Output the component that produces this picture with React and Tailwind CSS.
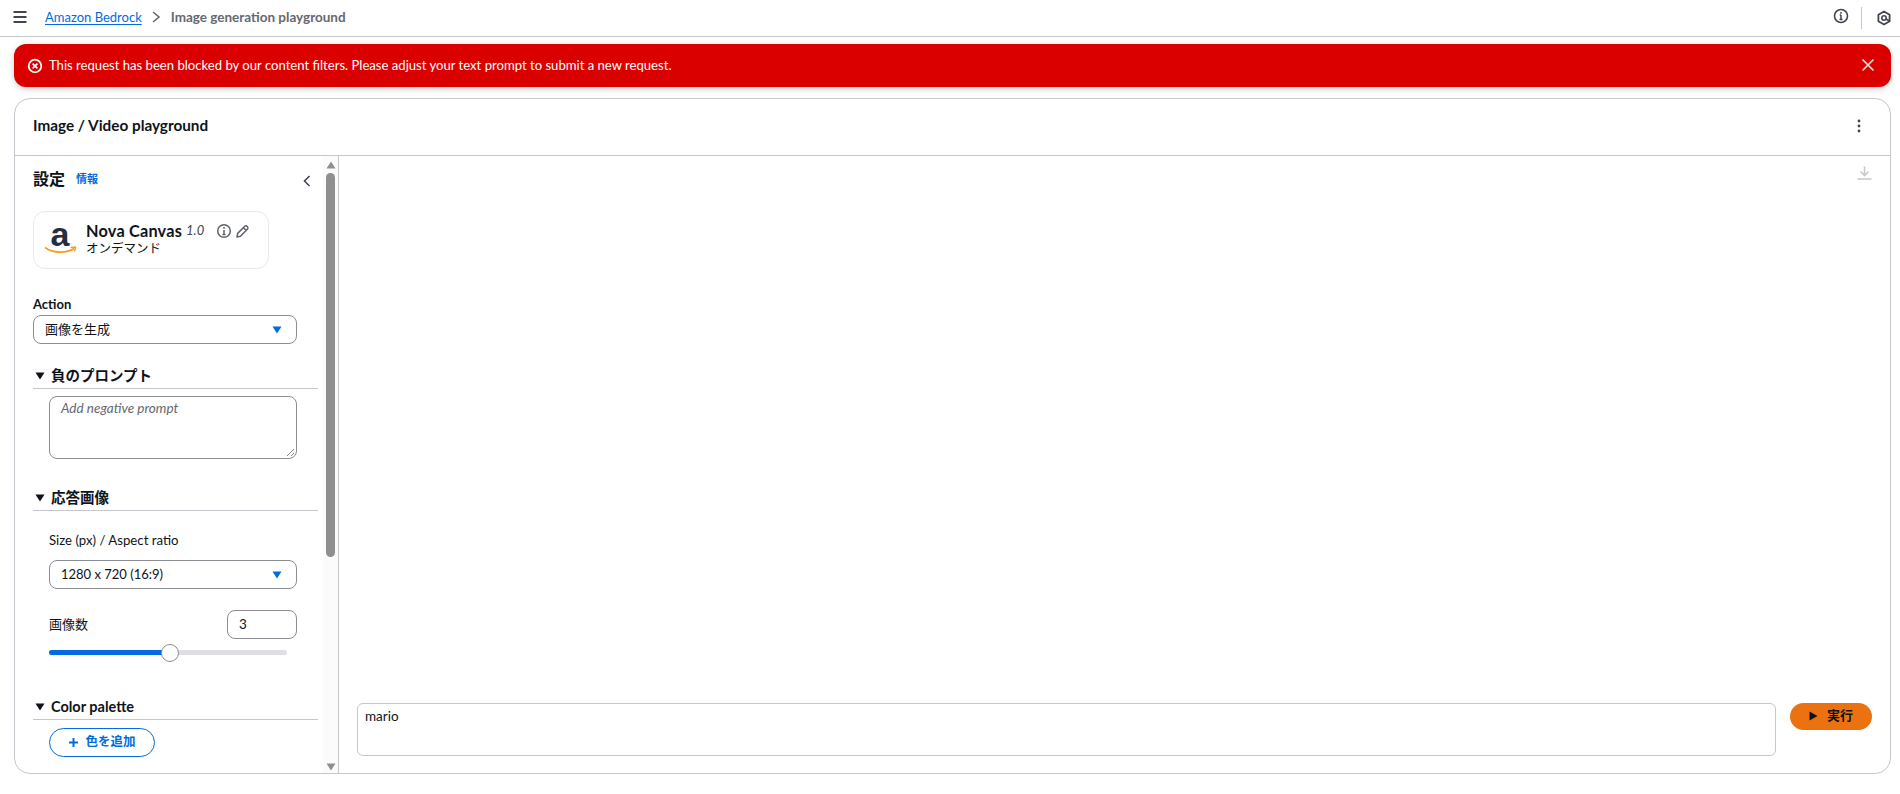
import React from "react";

const font = { fontFamily: 'Lato,"Noto Sans CJK JP",sans-serif' };

function Caret({ className = "" }) {
  return (
    <svg width="10" height="8" viewBox="0 0 10 8" className={className}>
      <path d="M0.5 0.5h9L5 7.5z" fill="currentColor" />
    </svg>
  );
}

function Section({ title }) {
  return (
    <div className="flex h-[23px] items-start gap-[6px] border-b border-[#c6c6cd] pl-[2px] text-[14.5px] leading-[20px] font-bold text-[#0f141a]">
      <Caret className="mt-[6px] shrink-0 text-[#0f141a]" />
      <span className="leading-[20px]">{title}</span>
    </div>
  );
}

function Select({ label }) {
  return (
    <div className="flex h-[29px] items-center justify-between rounded-[8px] border border-[#8c8c94] bg-white pl-[11px] pr-[14px] text-[13px] text-[#0f141a]">
      <span>{label}</span>
      <Caret className="text-[#006ce0]" />
    </div>
  );
}

export default function App() {
  return (
    <div className="flex h-[794px] w-[1900px] flex-col overflow-hidden bg-white text-[#0f141a]" style={font}>
      {/* top bar */}
      <header className="flex h-[37px] shrink-0 items-center border-b border-[#c6c6cd] pb-[3px] pl-[12px] pr-[8px]">
        <svg width="16" height="14" viewBox="0 0 16 14" className="text-[#424650]">
          <path d="M1.5 2h13M1.5 7h13M1.5 12h13" stroke="currentColor" strokeWidth="1.8" fill="none" />
        </svg>
        <a className="ml-[17px] text-[13px] leading-[18px] text-[#006ce0] underline underline-offset-2">Amazon Bedrock</a>
        <svg width="10" height="14" viewBox="0 0 10 14" className="ml-[9px] text-[#656871]">
          <path d="M2 2l6 5-6 5" stroke="currentColor" strokeWidth="1.6" fill="none" />
        </svg>
        <span className="ml-[10px] text-[13.5px] leading-[18px] font-bold text-[#656871]">Image generation playground</span>
        <div className="ml-auto flex items-center">
          <svg width="16" height="16" viewBox="0 0 16 16" className="mb-[2px] text-[#424650]">
            <circle cx="8" cy="8" r="6.5" stroke="currentColor" strokeWidth="1.6" fill="none" />
            <path d="M8 7v4.5M6.5 11.5h3M6.8 7h1.2M8 4v1.8" stroke="currentColor" strokeWidth="1.5" fill="none" />
          </svg>
          <div className="ml-[12px] mr-[14px] mt-[3px] h-[22px] w-px bg-[#c6c6cd]" />
          <svg width="16" height="16" viewBox="0 0 16 16" className="mt-[3px] text-[#424650]">
            <path d="M8 1.5l5.6 3.2v6.6L8 14.5l-5.6-3.2V4.7z" stroke="currentColor" strokeWidth="1.8" fill="none" strokeLinejoin="round" />
            <circle cx="8" cy="8" r="2.2" stroke="currentColor" strokeWidth="1.6" fill="none" />
            <path d="M10 9l3.5 2" stroke="currentColor" strokeWidth="1.6" />
          </svg>
        </div>
      </header>

      <div className="flex min-h-0 flex-1 flex-col pb-[20px] pl-[14px] pr-[9px] pt-[7px]">
        {/* flash */}
        <div className="flex h-[43px] shrink-0 items-center rounded-[12px] bg-[#db0000] pl-[13px] pr-[16px] text-white shadow-[0_2px_6px_rgba(0,7,22,0.2)]">
          <svg width="16" height="16" viewBox="0 0 16 16" className="shrink-0">
            <circle cx="8" cy="8" r="6.3" stroke="white" strokeWidth="1.8" fill="none" />
            <path d="M5.6 5.6l4.8 4.8M10.4 5.6l-4.8 4.8" stroke="white" strokeWidth="1.7" />
          </svg>
          <span className="ml-[6px] text-[13.1px] leading-[18px] mb-[2px]">
            This request has been blocked by our content filters. Please adjust your text prompt to submit a new request.
          </span>
          <svg width="14" height="14" viewBox="0 0 14 14" className="ml-auto mb-[2px]">
            <path d="M1.5 1.5l11 11M12.5 1.5l-11 11" stroke="#f0e0e0" strokeWidth="1.7" />
          </svg>
        </div>

        {/* card */}
        <div className="mt-[11px] flex min-h-0 flex-1 flex-col overflow-hidden rounded-[16px] border border-[#c6c6cd] bg-white">
          <div className="flex h-[57px] shrink-0 items-center justify-between border-b border-[#c6c6cd] pl-[18px] pr-[29px]">
            <h2 className="mb-[4px] text-[15.3px] leading-[20px] font-bold text-[#0f141a]">Image / Video playground</h2>
            <svg width="4" height="14" viewBox="0 0 4 14" className="mb-[3px] text-[#424650]">
              <circle cx="2" cy="2" r="1.4" fill="currentColor" />
              <circle cx="2" cy="7" r="1.4" fill="currentColor" />
              <circle cx="2" cy="12" r="1.4" fill="currentColor" />
            </svg>
          </div>

          <div className="flex min-h-0 flex-1">
            {/* sidebar */}
            <aside className="flex w-[324px] shrink-0 border-r border-[#c6c6cd]">
              <div className="min-w-0 flex-1 overflow-hidden pl-[18px] pr-[5px]">
                <div className="flex h-[46px] items-center">
                  <span className="text-[16px] leading-[20px] font-bold">設定</span>
                  <span className="ml-[11px] text-[11px] font-semibold text-[#006ce0]">情報</span>
                  <svg width="10" height="14" viewBox="0 0 10 14" className="ml-auto mr-[6px] mt-[3px] text-[#424650]">
                    <path d="M7.5 2L2.5 7l5 5" stroke="currentColor" strokeWidth="1.6" fill="none" />
                  </svg>
                </div>

                <div className="mt-[9px] flex h-[58px] w-[236px] items-center rounded-[12px] border border-[#e8e8ec] pb-[2px] pl-[9px]">
                  <div className="flex w-[34px] flex-col items-center">
                    <span className="h-[22px] text-[34px] leading-[20px] font-bold text-[#232f3e]" style={{ fontFamily: '"Liberation Sans",sans-serif' }}>a</span>
                    <svg width="33" height="9" viewBox="0 0 33 9" className="mt-[0px]">
                      <path d="M1 1.5C9 7.5 23 7.5 30 2.5" stroke="#f79c1d" strokeWidth="1.6" fill="none" />
                      <path d="M26.5 1.5l5-.5-1 4.5" stroke="#f79c1d" strokeWidth="1.4" fill="none" />
                    </svg>
                  </div>
                  <div className="ml-[9px] flex flex-col">
                    <div className="flex h-[20px] items-center">
                      <span className="text-[16.3px] font-bold tracking-[0.2px]">Nova Canvas</span>
                      <span className="ml-[4px] text-[13px] italic text-[#424650]">1.0</span>
                      <svg width="16" height="16" viewBox="0 0 16 16" className="ml-[12px] text-[#5f6269]">
                        <circle cx="8" cy="8" r="6.3" stroke="currentColor" strokeWidth="1.5" fill="none" />
                        <path d="M8 7v4.5M6.5 11.5h3M8 4v1.8" stroke="currentColor" strokeWidth="1.5" fill="none" />
                      </svg>
                      <svg width="15" height="15" viewBox="0 0 15 15" className="ml-[3px] text-[#5f6269]">
                        <path d="M2 13l.7-3.6 6.8-6.9a1.8 1.8 0 012.8 2.8l-6.8 6.9z M8.5 3.8l2.7 2.7" stroke="currentColor" strokeWidth="1.5" fill="none" strokeLinejoin="round" />
                      </svg>
                    </div>
                    <span className="text-[12.5px] leading-[16px] text-[#0f141a]">オンデマンド</span>
                  </div>
                </div>

                <div className="mt-[26px] text-[13px] leading-[18px] font-bold">Action</div>
                <div className="mt-[2px] w-[264px]"><Select label="画像を生成" /></div>

                <div className="mt-[22px]"><Section title="負のプロンプト" /></div>
                <div className="relative ml-[16px] mt-[7px] h-[63px] w-[248px] rounded-[8px] border border-[#8c8c94] px-[11px] py-[2px] text-[13.5px] leading-[18px] italic text-[#656871]">
                  Add negative prompt
                  <svg width="9" height="9" viewBox="0 0 9 9" className="absolute bottom-[1px] right-[1px] text-[#777]">
                    <path d="M1 8l7-7M5 8l3-3" stroke="currentColor" strokeWidth="0.9" />
                  </svg>
                </div>

                <div className="mt-[29px]"><Section title="応答画像" /></div>
                <div className="ml-[16px] mt-[20px] text-[13.2px] leading-[18px]">Size (px) / Aspect ratio</div>
                <div className="ml-[16px] mt-[11px] w-[248px]"><Select label="1280 x 720 (16:9)" /></div>

                <div className="ml-[16px] mt-[21px] flex h-[29px] w-[248px] items-center justify-between">
                  <span className="text-[13px]">画像数</span>
                  <div className="flex h-[29px] w-[70px] items-center rounded-[8px] border border-[#8c8c94] pl-[11px] text-[13.5px]">3</div>
                </div>
                <div className="relative ml-[16px] mt-[11px] h-[5px] w-[238px] rounded-full bg-[#dedee3]">
                  <div className="h-[5px] w-[121px] rounded-full bg-[#006ce0]" />
                  <div className="absolute left-[112px] top-[-6.5px] h-[18px] w-[18px] rounded-full border border-[#8c8c94] bg-white" />
                </div>

                <div className="mt-[42px]"><Section title="Color palette" /></div>
                <div className="ml-[16px] mt-[8px] flex h-[29px] w-[106px] items-center justify-center rounded-full border border-[#006ce0] text-[12.5px] font-bold text-[#006ce0]">
                  <svg width="11" height="11" viewBox="0 0 11 11" className="mr-[6px]">
                    <path d="M5.5 1v9M1 5.5h9" stroke="currentColor" strokeWidth="2" />
                  </svg>
                  色を追加
                </div>
              </div>

              {/* scrollbar */}
              <div className="flex w-[15px] shrink-0 flex-col items-center bg-[#fbfbfb] pb-[2px] pt-[5px]">
                <Caret className="text-[#8f8f8f] rotate-180" />
                <div className="mt-[4px] h-[384px] w-[9px] rounded-full bg-[#8f8f8f]" />
                <Caret className="mt-auto text-[#8f8f8f]" />
              </div>
            </aside>

            {/* main */}
            <main className="flex min-w-0 flex-1 flex-col pb-[17px] pl-[18px] pr-[18px] pt-[10px]">
              <div className="flex justify-end">
                <svg width="15" height="14" viewBox="0 0 15 14" className="text-[#c6c6cd]">
                  <path d="M7.5 0.5v8.5M3.5 5.5l4 4 4-4M0.5 13h14" stroke="currentColor" strokeWidth="1.6" fill="none" />
                </svg>
              </div>
              <div className="mt-auto flex items-start gap-[14px]">
                <div className="h-[53px] flex-1 rounded-[6px] border border-[#c6c6cd] px-[7px] py-[3px] text-[13.5px] leading-[18px]">mario</div>
                <button className="flex h-[27px] w-[82px] items-center justify-center rounded-full bg-[#ec7211] pb-[1px] text-[13px] font-bold text-[#0f141a]">
                  <svg width="9" height="10" viewBox="0 0 9 10" className="mr-[9px]">
                    <path d="M0.5 0.5l8 4.5-8 4.5z" fill="currentColor" />
                  </svg>
                  実行
                </button>
              </div>
            </main>
          </div>
        </div>
      </div>
    </div>
  );
}
